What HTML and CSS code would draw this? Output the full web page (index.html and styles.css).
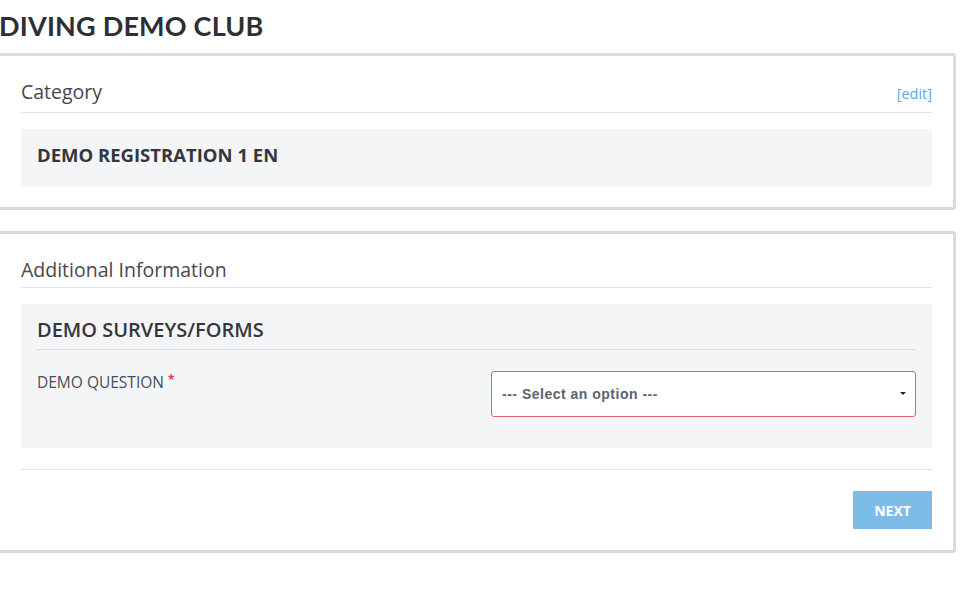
FILE: index.html
```html
<!DOCTYPE html>
<html lang="en">
<head>
<meta charset="utf-8">
<title>Diving Demo Club</title>
<link rel="stylesheet" href="styles.css">
</head>
<body>
<div class="page">
  <h1 class="club-title">DIVING DEMO CLUB</h1>

  <section class="card">
    <div class="card-header card-header--edit">
      <h2 class="card-title">Category</h2>
      <a class="edit-link" href="#">[edit]</a>
    </div>
    <div class="panel panel--simple">
      <div class="panel-name">DEMO REGISTRATION 1 EN</div>
    </div>
  </section>

  <section class="card">
    <div class="card-header">
      <h2 class="card-title">Additional Information</h2>
    </div>
    <div class="panel panel--form">
      <h3 class="panel-heading">DEMO SURVEYS/FORMS</h3>
      <div class="question-row">
        <label class="question-label" for="q1">DEMO QUESTION <span class="req">*</span></label>
        <div class="select-wrap">
          <select id="q1" class="select">
            <option>--- Select an option ---</option>
          </select>
          <span class="caret"></span>
        </div>
      </div>
    </div>
    <div class="card-footer">
      <button class="btn-next" type="button">NEXT</button>
    </div>
  </section>
</div>
</body>
</html>
```

FILE: styles.css
```css
* { box-sizing: border-box; }

html, body {
  margin: 0;
  padding: 0;
  background: #ffffff;
}

body {
  font-family: "Open Sans", "Noto Sans", "Liberation Sans", sans-serif;
  color: #3b3f45;
}

.page {
  margin-left: -3px;
  width: 959px;
}

.club-title {
  margin: 0;
  padding: 10px 0 0 2px;
  height: 53px;
  font-family: Lato, "Open Sans", sans-serif;
  font-size: 27px;
  font-weight: 700;
  line-height: 32px;
  color: #2e2f33;
  letter-spacing: 0.2px;
}

.card {
  border: 3px solid #d6dce2;
  border-radius: 3px;
  padding: 20px 21px 21px 21px;
  margin-bottom: 21px;
  background: #fff;
}

.card-header {
  display: flex;
  justify-content: space-between;
  align-items: baseline;
  border-bottom: 1px solid #dde2e7;
  height: 34px;
  padding-top: 3px;
}

.card-header--edit {
  height: 37px;
}

.card-title {
  margin: 0;
  font-size: 19.5px;
  font-weight: 400;
  line-height: 26px;
  color: #45484d;
}

.edit-link {
  font-size: 14.5px;
  color: #5aa8e4;
  text-decoration: none;
}

.panel {
  margin-top: 16px;
  background: #f4f5f7;
  padding: 16px;
}

.panel--simple {
  height: 57px;
  padding-top: 13px;
}

.panel-name {
  font-size: 18.5px;
  font-weight: 700;
  line-height: 25px;
  color: #34373c;
}

.panel--form {
  height: 144px;
  padding-top: 12px;
}

.panel-heading {
  margin: 0;
  font-size: 20px;
  font-weight: 600;
  line-height: 28px;
  color: #34373c;
  padding-bottom: 5px;
  border-bottom: 1px solid #d9dde2;
}

.question-row {
  display: flex;
  justify-content: space-between;
  align-items: flex-start;
  margin-top: 21px;
}

.question-label {
  font-size: 15.5px;
  line-height: 20px;
  color: #4a4e54;
  padding-top: 1px;
}

.req {
  color: #e04048;
  font-size: 12px;
  font-weight: 700;
  vertical-align: top;
  line-height: 16px;
}

.select-wrap {
  position: relative;
  width: 425px;
}

.select {
  -webkit-appearance: none;
  appearance: none;
  width: 100%;
  height: 46px;
  border: 1px solid #e0626a;
  border-radius: 3px;
  background: #fff;
  padding: 0 10px;
  font-family: "Liberation Sans", Arial, sans-serif;
  font-size: 14px;
  font-weight: 700;
  color: #5a6470;
  letter-spacing: 0.5px;
}

.caret {
  position: absolute;
  right: 10px;
  top: 21px;
  width: 0;
  height: 0;
  border-left: 3px solid transparent;
  border-right: 3px solid transparent;
  border-top: 3px solid #222;
}

.card-footer {
  margin-top: 21px;
  border-top: 1px solid #dde2e7;
  padding-top: 21px;
  display: flex;
  justify-content: flex-end;
}

.btn-next {
  width: 79px;
  height: 38px;
  border: none;
  background: #7ebce8;
  color: #ffffff;
  font-family: "Open Sans", "Liberation Sans", sans-serif;
  font-size: 14px;
  font-weight: 700;
  cursor: pointer;
}
```
